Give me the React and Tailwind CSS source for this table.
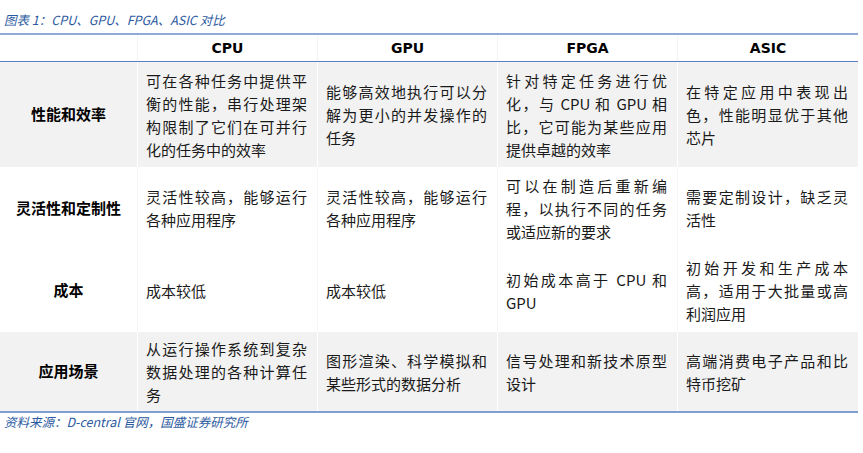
const rows = [
  {
    label: '性能和效率',
    bg: 'bg-[#f2f2f2]',
    h: 'h-[105px]',
    cells: [
      ['可在各种任务中提供平', '衡的性能，串行处理架', '构限制了它们在可并行', '化的任务中的效率'],
      ['能够高效地执行可以分', '解为更小的并发操作的', '任务'],
      ['针对特定任务进行优', '化，与 CPU 和 GPU 相', '比，它可能为某些应用', '提供卓越的效率'],
      ['在特定应用中表现出', '色，性能明显优于其他', '芯片'],
    ],
  },
  {
    label: '灵活性和定制性',
    bg: 'bg-white',
    h: 'h-[82px]',
    cells: [
      ['灵活性较高，能够运行', '各种应用程序'],
      ['灵活性较高，能够运行', '各种应用程序'],
      ['可以在制造后重新编', '程，以执行不同的任务', '或适应新的要求'],
      ['需要定制设计，缺乏灵', '活性'],
    ],
  },
  {
    label: '成本',
    bg: 'bg-white',
    h: 'h-[83px]',
    cells: [
      ['成本较低'],
      ['成本较低'],
      ['初始成本高于 CPU 和', 'GPU'],
      ['初始开发和生产成本', '高，适用于大批量或高', '利润应用'],
    ],
  },
  {
    label: '应用场景',
    bg: 'bg-[#f2f2f2]',
    h: 'h-[79px]',
    cells: [
      ['从运行操作系统到复杂', '数据处理的各种计算任', '务'],
      ['图形渲染、科学模拟和', '某些形式的数据分析'],
      ['信号处理和新技术原型', '设计'],
      ['高端消费电子产品和比', '特币挖矿'],
    ],
  },
];

const heads = ['CPU', 'GPU', 'FPGA', 'ASIC'];

function Cell({ lines }) {
  return (
    <div className="flex flex-col justify-center pl-[8px] pr-[10px] h-full">
      {lines.map((line, i) => (
        <div
          key={i}
          className={
            i < lines.length - 1
              ? 'text-justify [text-align-last:justify] leading-[23px]'
              : 'text-left leading-[23px]'
          }
        >
          {line}
        </div>
      ))}
    </div>
  );
}

export default function App() {
  return (
    <div className="w-[863px] h-[453px] bg-white text-[#1a1a1a] font-['Noto_Sans_CJK_SC',sans-serif] overflow-hidden">
      <div className="pt-[11px] pl-[4px] h-[33px] text-[12.5px] italic text-[#2c5aa0] leading-[18px]">
        图表 1：CPU、GPU、FPGA、ASIC 对比
      </div>

      <div className="w-[858px] border-t-2 border-[#8eaad8]">
        {/* header */}
        <div className="grid grid-cols-[137px_180px_180px_180px_181px] h-[27px] border-b border-[#5a80bd] text-black">
          <div />
          {heads.map((h) => (
            <div
              key={h}
              className="flex items-center justify-center border-l border-[#f4f4f4] font-['DejaVu_Sans',sans-serif] font-bold text-[14px]"
            >
              {h}
            </div>
          ))}
        </div>

        {rows.map((r) => (
          <div
            key={r.label}
            className={`grid grid-cols-[137px_180px_180px_180px_181px] ${r.h} ${r.bg} text-[15px]`}
          >
            <div className="flex items-center justify-center font-bold text-black">{r.label}</div>
            {r.cells.map((c, i) => (
              <div key={i} className={r.bg === 'bg-white' ? 'border-l border-[#f7f7f7]' : 'border-l border-white'}>
                <Cell lines={c} />
              </div>
            ))}
          </div>
        ))}
        <div className="h-[2px] bg-[#7f9fd3]" />
      </div>

      <div className="pl-[4px] pt-[1px] text-[12.5px] italic text-[#2c5aa0] leading-[16px]">
        资料来源：D-central 官网，国盛证券研究所
      </div>
    </div>
  );
}
